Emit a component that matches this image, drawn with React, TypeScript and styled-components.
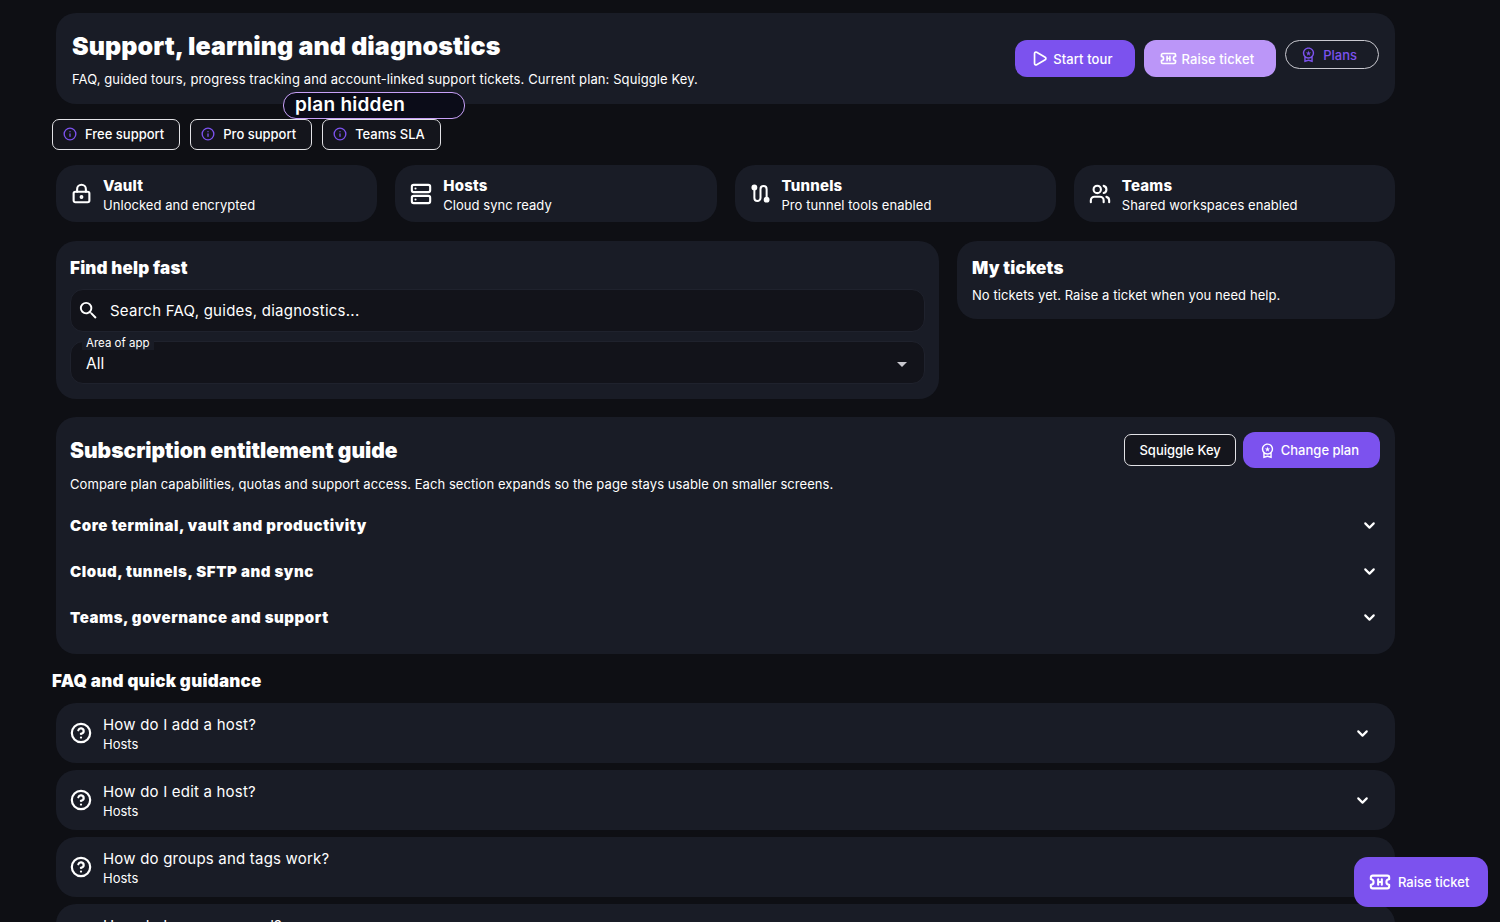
import styled, { createGlobalStyle } from "styled-components";
import { ChevronDown, CircleHelp, Info, LockKeyhole, Play, Server, Users } from "lucide-react";
import { MdOutlineWorkspacePremium, MdSearch } from "react-icons/md";

const GlobalStyle = createGlobalStyle`
  html, body {
    margin: 0;
    height: 100%;
    overflow: hidden;
    background: #0e0f14;
    color: #fff;
    font-family: Inter, "Liberation Sans", sans-serif;
  }
  * { box-sizing: border-box; }
`;

const purple = "#7c52ee";

const TicketIcon = ({ size }: { size: number }) => (
  <svg width={size} height={size} viewBox="0 0 24 24" fill="none" stroke="currentColor" strokeWidth="2.3" strokeLinecap="round" strokeLinejoin="round">
    <path d="M2 9a3 3 0 0 1 0 6v2a2 2 0 0 0 2 2h16a2 2 0 0 0 2-2v-2a3 3 0 0 1 0-6V7a2 2 0 0 0-2-2H4a2 2 0 0 0-2 2Z" />
    <path d="M10 9v6M14 9v6M10 12h4" />
  </svg>
);

const TunnelIcon = ({ size }: { size: number }) => (
  <svg width={size} height={size} viewBox="0 0 24 24" fill="none" stroke="currentColor" strokeWidth="2.3" strokeLinecap="round">
    <path d="M5 6v11a3.5 3.5 0 0 0 7 0V7a3.5 3.5 0 0 1 7 0v11" />
    <circle cx="5" cy="5" r="2.2" fill="currentColor" />
    <circle cx="19" cy="19" r="2.2" fill="currentColor" />
  </svg>
);

const Page = styled.div`
  position: relative;
  width: 1347px;
  margin-left: 52px;
  padding-top: 13px;
`;

const Card = styled.section`
  background: #191c26;
  border-radius: 20px;
`;

const Hero = styled(Card)`
  margin: 0 4px;
  height: 91px;
  padding: 18px 16px 0;
  display: flex;
  justify-content: space-between;
`;

const HeroTitle = styled.h1`
  margin: 0;
  font-size: 25px;
  line-height: 30px;
  font-weight: 900;
  letter-spacing: 0.1px;
`;

const HeroText = styled.p`
  margin: 10px 0 0;
  font-size: 13px;
  line-height: 16px;
  letter-spacing: 0.1px;
`;

const HeroActions = styled.div`
  display: flex;
  align-items: flex-start;
  gap: 9px;
  margin-top: 9px;
`;

const Button = styled.button<{ $tone?: "main" | "light" }>`
  height: 37px;
  padding: 0 22px 0 16px;
  border: none;
  border-radius: 12px;
  display: flex;
  align-items: center;
  gap: 5px;
  color: #fff;
  font: 500 13px Inter, sans-serif;
  letter-spacing: 0.1px;
  background: ${(p) => (p.$tone === "light" ? "#bb96f8" : purple)};
`;

const ChangePlanButton = styled(Button)`
  height: 36px;
  padding-right: 21px;
  letter-spacing: 0;
`;

const PlansButton = styled.button`
  height: 29px;
  padding: 0 21px 0 14px;
  background: transparent;
  border: 1px solid #c9c9d0;
  border-radius: 15px;
  display: flex;
  align-items: center;
  gap: 6px;
  color: ${purple};
  font: 500 13px Inter, sans-serif;
`;

const PlanBadge = styled.div`
  position: absolute;
  left: 231px;
  top: 92px;
  width: 182px;
  height: 27px;
  padding-left: 11px;
  border: 1.5px solid #c7a0f8;
  border-radius: 13px;
  background: #0b0c18;
  font-size: 19px;
  font-weight: 600;
  line-height: 24px;
  letter-spacing: 0.25px;
`;

const ChipRow = styled.div`
  display: flex;
  gap: 10px;
  margin-top: 15px;
`;

const Chip = styled.div`
  height: 31px;
  padding: 0 15px 1px 10px;
  display: flex;
  align-items: center;
  gap: 8px;
  border: 1px solid #e2e2e6;
  border-radius: 7px;
  background: #14151c;
  font-size: 13px;
  font-weight: 500;
  svg { color: ${purple}; }
`;

const StatGrid = styled.div`
  display: grid;
  grid-template-columns: repeat(4, 1fr);
  gap: 18px;
  margin: 15px 4px 0;
`;

const StatCard = styled(Card)`
  height: 57px;
  padding: 0 15px;
  display: flex;
  align-items: center;
  gap: 11px;
`;

const StatBody = styled.div`
  padding-top: 3px;
`;

const StatTitle = styled.div`
  font-size: 15px;
  line-height: 18px;
  font-weight: 800;
  letter-spacing: 0.2px;
`;

const StatText = styled.div`
  margin-top: 2px;
  font-size: 13px;
  line-height: 16px;
  letter-spacing: 0.05px;
`;

const HelpGrid = styled.div`
  display: grid;
  grid-template-columns: 883px 438px;
  gap: 18px;
  align-items: start;
  margin: 19px 4px 0;
`;

const FindCard = styled(Card)`
  height: 158px;
  padding: 17px 14px;
`;

const CardTitle = styled.h2`
  margin: 0;
  font-size: 17px;
  line-height: 21px;
  font-weight: 900;
  letter-spacing: 0.2px;
`;

const SearchBox = styled.div`
  height: 43px;
  margin-top: 10px;
  padding: 0 11px 0 6px;
  display: flex;
  align-items: center;
  gap: 10px;
  background: #12131a;
  border: 1px solid #1f222d;
  border-radius: 13px;
  font-size: 15px;
  letter-spacing: 0.25px;
`;

const SelectBox = styled.div`
  position: relative;
  height: 43px;
  margin-top: 9px;
  padding: 13px 17px 0 15px;
  display: flex;
  justify-content: space-between;
  background: #12131a;
  border: 1px solid #1f222d;
  border-radius: 13px;
  font-size: 15.5px;
  line-height: 18px;
`;

const FloatLabel = styled.span`
  position: absolute;
  left: 11px;
  top: -6px;
  padding: 0 4px;
  background: #191c26;
  font-size: 11.5px;
  line-height: 14px;
`;

const Caret = styled.span`
  width: 0;
  height: 0;
  margin: 7px 0 0;
  border-left: 5px solid transparent;
  border-right: 5px solid transparent;
  border-top: 5px solid #c8c8ce;
`;

const TicketsCard = styled(Card)`
  height: 78px;
  padding: 17px 15px;
`;

const TicketsText = styled.p`
  margin: 8px 0 0;
  font-size: 13px;
  line-height: 16px;
  letter-spacing: 0.08px;
`;

const GuideCard = styled(Card)`
  height: 237px;
  margin: 18px 4px 0;
  padding: 15px 15px 15px 14px;
`;

const GuideHead = styled.div`
  display: flex;
  justify-content: space-between;
  align-items: center;
`;

const GuideTitle = styled.h2`
  margin: 0;
  font-size: 21px;
  font-weight: 900;
`;

const GuideActions = styled.div`
  display: flex;
  align-items: center;
  gap: 7px;
`;

const PlanTag = styled.div`
  height: 32px;
  padding: 0 14px;
  display: flex;
  align-items: center;
  border: 1px solid #e2e2e6;
  border-radius: 7px;
  background: #14151c;
  font-size: 13px;
  font-weight: 500;
`;

const GuideText = styled.p`
  margin: 8px 0 11px;
  font-size: 13px;
  line-height: 16px;
  letter-spacing: 0.07px;
`;

const GuideRow = styled.div`
  height: 45.7px;
  display: flex;
  align-items: center;
  justify-content: space-between;
  font-size: 15px;
  font-weight: 900;
  letter-spacing: 0.55px;
  svg { margin-right: 2px; }
`;

const SectionTitle = styled.h2`
  margin: 17px 0 11px;
  font-size: 17px;
  line-height: 21px;
  font-weight: 900;
  letter-spacing: 0.25px;
`;

const FaqList = styled.div`
  display: flex;
  flex-direction: column;
  gap: 7px;
  margin: 0 4px;
`;

const FaqRow = styled(Card)`
  height: 60px;
  padding: 0 24px 0 14px;
  display: flex;
  align-items: center;
  gap: 11px;
`;

const FaqBody = styled.div`
  flex: 1;
  padding-top: 1px;
`;

const FaqQuestion = styled.div`
  font-size: 15px;
  line-height: 19px;
  letter-spacing: 0.2px;
`;

const FaqArea = styled.div`
  margin-top: 2px;
  font-size: 13px;
  line-height: 16px;
`;

const FloatingButton = styled.button`
  position: fixed;
  right: 12px;
  bottom: 15px;
  width: 134px;
  height: 50px;
  padding: 0 0 0 15px;
  border: none;
  border-radius: 14px;
  display: flex;
  align-items: center;
  gap: 7px;
  color: #fff;
  background: ${purple};
  font: 500 13px Inter, sans-serif;
`;

const stats = [
  { icon: <LockKeyhole size={21} strokeWidth={2.4} />, title: "Vault", text: "Unlocked and encrypted" },
  { icon: <Server size={22} strokeWidth={2.3} />, title: "Hosts", text: "Cloud sync ready" },
  { icon: <TunnelIcon size={21} />, title: "Tunnels", text: "Pro tunnel tools enabled" },
  { icon: <Users size={22} strokeWidth={2.3} />, title: "Teams", text: "Shared workspaces enabled" },
];

const guideRows = [
  "Core terminal, vault and productivity",
  "Cloud, tunnels, SFTP and sync",
  "Teams, governance and support",
];

const faqs = [
  "How do I add a host?",
  "How do I edit a host?",
  "How do groups and tags work?",
  "How do I use command?",
];

export default function App() {
  return (
    <Page>
      <GlobalStyle />
      <Hero>
        <div>
          <HeroTitle>Support, learning and diagnostics</HeroTitle>
          <HeroText>
            FAQ, guided tours, progress tracking and account-linked support tickets. Current plan: Squiggle Key.
          </HeroText>
        </div>
        <HeroActions>
          <Button>
            <Play size={17} strokeWidth={2.4} />
            Start tour
          </Button>
          <Button $tone="light">
            <TicketIcon size={17} />
            Raise ticket
          </Button>
          <PlansButton>
            <MdOutlineWorkspacePremium size={17} />
            Plans
          </PlansButton>
        </HeroActions>
      </Hero>
      <PlanBadge>plan hidden</PlanBadge>
      <ChipRow>
        {["Free support", "Pro support", "Teams SLA"].map((label) => (
          <Chip key={label}>
            <Info size={14} strokeWidth={2.3} />
            {label}
          </Chip>
        ))}
      </ChipRow>
      <StatGrid>
        {stats.map(({ icon, title, text }) => (
          <StatCard key={title}>
            {icon}
            <StatBody>
              <StatTitle>{title}</StatTitle>
              <StatText>{text}</StatText>
            </StatBody>
          </StatCard>
        ))}
      </StatGrid>
      <HelpGrid>
        <FindCard>
          <CardTitle>Find help fast</CardTitle>
          <SearchBox>
            <MdSearch size={23} />
            Search FAQ, guides, diagnostics...
          </SearchBox>
          <SelectBox>
            <FloatLabel>Area of app</FloatLabel>
            All
            <Caret />
          </SelectBox>
        </FindCard>
        <TicketsCard>
          <CardTitle>My tickets</CardTitle>
          <TicketsText>No tickets yet. Raise a ticket when you need help.</TicketsText>
        </TicketsCard>
      </HelpGrid>
      <GuideCard>
        <GuideHead>
          <GuideTitle>Subscription entitlement guide</GuideTitle>
          <GuideActions>
            <PlanTag>Squiggle Key</PlanTag>
            <ChangePlanButton>
              <MdOutlineWorkspacePremium size={17} />
              Change plan
            </ChangePlanButton>
          </GuideActions>
        </GuideHead>
        <GuideText>
          Compare plan capabilities, quotas and support access. Each section expands so the page stays usable on smaller screens.
        </GuideText>
        {guideRows.map((row) => (
          <GuideRow key={row}>
            {row}
            <ChevronDown size={17} strokeWidth={3} />
          </GuideRow>
        ))}
      </GuideCard>
      <SectionTitle>FAQ and quick guidance</SectionTitle>
      <FaqList>
        {faqs.map((q) => (
          <FaqRow key={q}>
            <CircleHelp size={22} strokeWidth={2.4} />
            <FaqBody>
              <FaqQuestion>{q}</FaqQuestion>
              <FaqArea>Hosts</FaqArea>
            </FaqBody>
            <ChevronDown size={17} strokeWidth={3} />
          </FaqRow>
        ))}
      </FaqList>
      <FloatingButton>
        <TicketIcon size={22} />
        Raise ticket
      </FloatingButton>
    </Page>
  );
}
